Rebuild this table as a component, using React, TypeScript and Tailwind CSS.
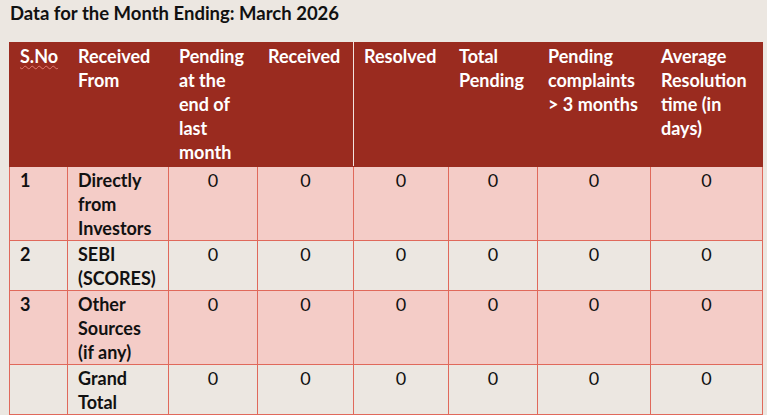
import React from "react";

type Row = {
  sno: string;
  from: string[];
  values: number[];
  shaded: boolean;
  height: string;
};

const headers: string[][] = [
  ["S.No"],
  ["Received", "From"],
  ["Pending", "at the", "end of", "last", "month"],
  ["Received"],
  ["Resolved"],
  ["Total", "Pending"],
  ["Pending", "complaints", "> 3 months"],
  ["Average", "Resolution", "time (in", "days)"],
];

const rows: Row[] = [
  { sno: "1", from: ["Directly", "from", "Investors"], values: [0, 0, 0, 0, 0, 0], shaded: true, height: "h-[73px]" },
  { sno: "2", from: ["SEBI", "(SCORES)"], values: [0, 0, 0, 0, 0, 0], shaded: false, height: "h-[50px]" },
  { sno: "3", from: ["Other", "Sources", "(if any)"], values: [0, 0, 0, 0, 0, 0], shaded: true, height: "h-[74px]" },
  { sno: "", from: ["Grand", "Total"], values: [0, 0, 0, 0, 0, 0], shaded: false, height: "h-[49px]" },
];

const colWidths = ["w-[58px]", "w-[101px]", "w-[89px]", "w-[96px]", "w-[95px]", "w-[89px]", "w-[113px]", "w-[112px]"];

const Lines: React.FC<{ lines: string[] }> = ({ lines }) => (
  <>
    {lines.map((l, i) => (
      <React.Fragment key={i}>
        {l}
        {i < lines.length - 1 && <br />}
      </React.Fragment>
    ))}
  </>
);

export default function App() {
  return (
    <div className="w-[767px] h-[415px] bg-[#ece7e1] overflow-hidden font-['Lato',sans-serif] text-[18px] leading-[24px] text-[#111]">
      <h1 className="pl-[10px] pt-px font-bold text-[18.5px] leading-[24px] whitespace-nowrap">
        Data for the Month Ending: March 2026
      </h1>
      <table className="ml-[9px] mt-[17px] w-[753px] table-fixed border-collapse">
        <colgroup>
          {colWidths.map((w, i) => (
            <col key={i} className={w} />
          ))}
        </colgroup>
        <thead>
          <tr className="bg-[#9a2b1f] text-white h-[124px]">
            {headers.map((h, i) => (
              <th
                key={i}
                className={
                  "align-top text-left font-bold whitespace-nowrap pl-[10px] pt-px pb-0 border border-[#9a2b1f]" +
                  (i === 3 ? " border-r-[#f3e3df]" : "")
                }
              >
                {i === 0 ? (
                  <span className="underline decoration-wavy decoration-[#e57a70] decoration-1 underline-offset-2">
                    S.No
                  </span>
                ) : (
                  <Lines lines={h} />
                )}
              </th>
            ))}
          </tr>
        </thead>
        <tbody>
          {rows.map((r, ri) => (
            <tr key={ri} className={(r.shaded ? "bg-[#f4ccc7] " : "bg-[#ece7e1] ") + r.height}>
              <td className="align-top pl-[10px] pt-px pb-0 font-bold border border-[#e0695b]">{r.sno}</td>
              <td className="align-top pl-[10px] pt-px pb-0 font-bold whitespace-nowrap border border-[#e0695b]">
                <Lines lines={r.from} />
              </td>
              {r.values.map((v, vi) => (
                <td key={vi} className="align-top text-center pt-px pb-0 font-normal border border-[#e0695b]">
                  {v}
                </td>
              ))}
            </tr>
          ))}
        </tbody>
      </table>
    </div>
  );
}
